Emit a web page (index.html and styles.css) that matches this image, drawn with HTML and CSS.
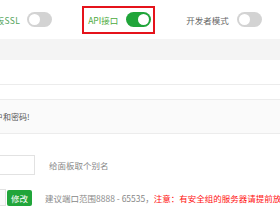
FILE: index.html
```html
<!DOCTYPE html>
<html>
<head>
<meta charset="utf-8">
<link rel="stylesheet" href="styles.css">
</head>
<body>
<div class="page">
  <div class="toolbar">
    <div class="item item-ssl">
      <span class="label green-label">面板SSL</span>
      <span class="toggle"><span class="knob"></span></span>
    </div>
    <div class="item item-api">
      <span class="label api-label">API接口</span>
      <span class="toggle on"><span class="knob"></span></span>
    </div>
    <div class="item item-dev">
      <span class="label">开发者模式</span>
      <span class="toggle"><span class="knob"></span></span>
    </div>
  </div>
  <div class="band"></div>
  <div class="blank"></div>
  <div class="line-row"></div>
  <div class="notice"><span class="notice-text">默认面板用户和密码!</span></div>
  <div class="form">
    <div class="form-row row-alias">
      <div class="input input-alias"></div>
      <span class="hint">给面板取个别名</span>
    </div>
    <div class="form-row row-port">
      <div class="input-group">
        <div class="input input-port"></div>
        <button class="btn">修改</button>
      </div>
      <span class="hint nowrap">建议端口范围8888 - 65535，<span class="warn">注意：有安全组的服务器请提前放行新端口</span></span>
    </div>
  </div>
</div>
</body>
</html>
```
FILE: styles.css
```css
* { box-sizing: border-box; }
html, body { margin: 0; padding: 0; background: #fff; }
body {
  width: 280px;
  height: 210px;
  overflow: hidden;
  font-family: "Noto Sans CJK SC", "Noto Sans", sans-serif;
  font-size: 8.5px;
  color: #666;
}
.page { width: 280px; overflow: hidden; }
.toolbar {
  height: 39px;
  display: flex;
  align-items: center;
  margin-left: -13px;
}
.item {
  display: flex;
  align-items: center;
  gap: 9px;
  height: 28px;
}
.item-ssl { gap: 7px; }
.item-ssl .label { letter-spacing: 0.3px; }
.item-api {
  margin-left: 30px;
  border: 2px solid #e5131b;
  padding: 0 2px 0 4px;
  gap: 8px;
}
.item-dev { margin-left: 31px; gap: 8px; }
.label { white-space: nowrap; color: #666; }
.green-label { color: #52a35a; }
.api-label { color: #4caa3c; }
.toggle {
  width: 25px;
  height: 15px;
  border-radius: 8px;
  background: #d3d3d3;
  display: flex;
  align-items: center;
  padding: 0 2px;
}
.toggle .knob {
  width: 11px;
  height: 11px;
  border-radius: 50%;
  background: #fff;
}
.toggle.on { background: #20a53a; justify-content: flex-end; }
.band { height: 21px; background: #f4f4f4; }
.blank { height: 25px; border-bottom: 1px solid #ececec; }
.line-row { height: 15px; border-bottom: 1px solid #ececec; }
.notice {
  height: 34px;
  background: #fafafa;
  border-bottom: 1px solid #ececec;
  display: flex;
  align-items: center;
  overflow: hidden;
}
.notice-text { color: #555; white-space: nowrap; margin-left: -45px; font-size: 8px; }
.form { padding-top: 21px; }
.form-row { display: flex; align-items: center; }
.row-alias { height: 20px; }
.row-port { height: 17px; margin-top: 14px; }
.input {
  height: 20px;
  border: 1px solid #e2e2e2;
  background: #fff;
}
.input-alias { width: 45px; margin-left: -10px; }
.hint { color: #888; white-space: nowrap; margin-left: 14px; }
.input-group { display: flex; align-items: center; margin-left: -10px; }
.input-port { width: 16px; height: 17px; background: #fafafa; }
.btn {
  margin-left: 1px;
  height: 16px;
  width: 25px;
  padding: 0;
  border: none;
  border-radius: 2px;
  background: #20a53a;
  color: #fff;
  font-family: inherit;
  font-size: 8.5px;
}
.row-port .hint { margin-left: 13px; }
.warn { color: #f11; }
```
